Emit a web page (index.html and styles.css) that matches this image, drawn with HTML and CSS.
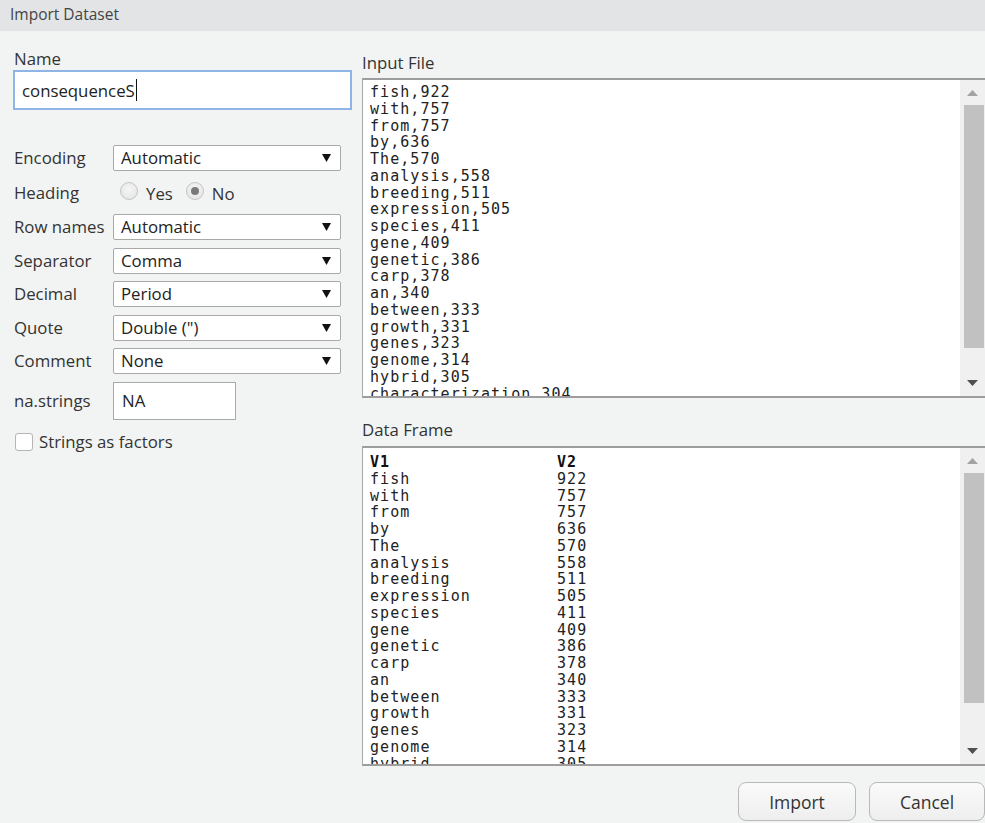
FILE: index.html
```html
<!DOCTYPE html>
<html>
<head>
<meta charset="utf-8">
<link rel="stylesheet" href="styles.css">
</head>
<body>
<div class="titlebar">Import Dataset</div>
<div class="main">
  <div class="left">
    <div class="name-label">Name</div>
    <div class="name-input">consequenceS<span class="caret"></span></div>
    <div class="form">
      <div class="lbl">Encoding</div>
      <div class="select"><span>Automatic</span><svg class="arrow" width="9" height="8" viewBox="0 0 9 8"><path d="M0 0H9L4.5 8Z" fill="#111"/></svg></div>

      <div class="lbl">Heading</div>
      <div class="radios">
        <span class="radio"></span><span class="rtext">Yes</span>
        <span class="radio checked"></span><span class="rtext">No</span>
      </div>

      <div class="lbl">Row names</div>
      <div class="select"><span>Automatic</span><svg class="arrow" width="9" height="8" viewBox="0 0 9 8"><path d="M0 0H9L4.5 8Z" fill="#111"/></svg></div>

      <div class="lbl">Separator</div>
      <div class="select"><span>Comma</span><svg class="arrow" width="9" height="8" viewBox="0 0 9 8"><path d="M0 0H9L4.5 8Z" fill="#111"/></svg></div>

      <div class="lbl">Decimal</div>
      <div class="select"><span>Period</span><svg class="arrow" width="9" height="8" viewBox="0 0 9 8"><path d="M0 0H9L4.5 8Z" fill="#111"/></svg></div>

      <div class="lbl">Quote</div>
      <div class="select"><span>Double (")</span><svg class="arrow" width="9" height="8" viewBox="0 0 9 8"><path d="M0 0H9L4.5 8Z" fill="#111"/></svg></div>

      <div class="lbl">Comment</div>
      <div class="select"><span>None</span><svg class="arrow" width="9" height="8" viewBox="0 0 9 8"><path d="M0 0H9L4.5 8Z" fill="#111"/></svg></div>

      <div class="lbl">na.strings</div>
      <div class="na-row"><div class="na-input">NA</div></div>
    </div>
    <div class="check-row"><span class="checkbox"></span><span>Strings as factors</span></div>
  </div>

  <div class="right">
    <div class="section-label">Input File</div>
    <div class="box">
      <pre class="box-text">fish,922
with,757
from,757
by,636
The,570
analysis,558
breeding,511
expression,505
species,411
gene,409
genetic,386
carp,378
an,340
between,333
growth,331
genes,323
genome,314
hybrid,305
characterization,304
study,299
population,287</pre>
      <div class="scrollbar">
        <svg class="sb-arrow" width="11" height="6" viewBox="0 0 11 6"><path d="M0 6H11L5.5 0Z" fill="#a3a3a3"/></svg>
        <div class="thumb thumb-input"></div>
        <svg class="sb-arrow" width="11" height="6" viewBox="0 0 11 6"><path d="M0 0H11L5.5 6Z" fill="#505050"/></svg>
      </div>
    </div>

    <div class="section-label df-label">Data Frame</div>
    <div class="box">
      <div class="df-text">
        <div class="df-row head"><span>V1</span><span>V2</span></div>
        <div class="df-row"><span>fish</span><span>922</span></div>
        <div class="df-row"><span>with</span><span>757</span></div>
        <div class="df-row"><span>from</span><span>757</span></div>
        <div class="df-row"><span>by</span><span>636</span></div>
        <div class="df-row"><span>The</span><span>570</span></div>
        <div class="df-row"><span>analysis</span><span>558</span></div>
        <div class="df-row"><span>breeding</span><span>511</span></div>
        <div class="df-row"><span>expression</span><span>505</span></div>
        <div class="df-row"><span>species</span><span>411</span></div>
        <div class="df-row"><span>gene</span><span>409</span></div>
        <div class="df-row"><span>genetic</span><span>386</span></div>
        <div class="df-row"><span>carp</span><span>378</span></div>
        <div class="df-row"><span>an</span><span>340</span></div>
        <div class="df-row"><span>between</span><span>333</span></div>
        <div class="df-row"><span>growth</span><span>331</span></div>
        <div class="df-row"><span>genes</span><span>323</span></div>
        <div class="df-row"><span>genome</span><span>314</span></div>
        <div class="df-row"><span>hybrid</span><span>305</span></div>
        <div class="df-row"><span>characterization</span><span>304</span></div>
      </div>
      <div class="scrollbar">
        <svg class="sb-arrow" width="11" height="6" viewBox="0 0 11 6"><path d="M0 6H11L5.5 0Z" fill="#a3a3a3"/></svg>
        <div class="thumb thumb-df"></div>
        <svg class="sb-arrow" width="11" height="6" viewBox="0 0 11 6"><path d="M0 0H11L5.5 6Z" fill="#505050"/></svg>
      </div>
    </div>

    <div class="footer">
      <div class="btn">Import</div>
      <div class="btn btn-cancel">Cancel</div>
    </div>
  </div>
</div>
</body>
</html>
```

FILE: styles.css
```css
html, body {
  margin: 0;
  padding: 0;
  height: 100%;
  overflow: hidden;
}
body {
  background: #f2f3f3;
  font-family: "Open Sans", "Noto Sans", sans-serif;
  color: #333;
  font-size: 16.8px;
}
.titlebar {
  height: 31px;
  background: #e3e4e6;
  color: #444;
  font-size: 15.5px;
  line-height: 29px;
  padding-left: 10px;
  box-sizing: border-box;
}
.main {
  display: grid;
  grid-template-columns: 339px 623px;
  column-gap: 10px;
  padding-left: 13px;
  padding-top: 17px;
}
.left {
  display: flex;
  flex-direction: column;
}
.name-label {
  height: 22px;
  line-height: 22px;
  padding-left: 1px;
  color: #333;
}
.name-input {
  height: 40px;
  box-sizing: border-box;
  border: 2px solid #8fb5e6;
  background: #fff;
  padding-left: 7px;
  display: flex;
  align-items: center;
  color: #222;
}
.caret {
  display: inline-block;
  width: 1px;
  height: 22px;
  background: #111;
  margin-left: 1px;
}
.form {
  margin-top: 35px;
  display: grid;
  grid-template-columns: 100px 228px;
  grid-template-rows: 26px 28px 26px 26px 26px 26px 26px 38px;
  row-gap: 7.5px;
  align-items: center;
}
.lbl {
  padding-left: 1px;
  color: #333;
  white-space: nowrap;
  line-height: 22px;
}
.select {
  height: 26px;
  box-sizing: border-box;
  border: 1px solid #a9a9a9;
  border-radius: 2px;
  background: #fff;
  display: flex;
  align-items: center;
  justify-content: space-between;
  padding: 0 9px 0 7px;
  color: #222;
  line-height: 22px;
}
.arrow {
  display: block;
}
.radios {
  display: flex;
  align-items: center;
  padding-left: 7px;
  padding-top: 2px;
  line-height: 22px;
}
.radio {
  width: 16px;
  height: 16px;
  border-radius: 50%;
  border: 1px solid #c4c4c4;
  background: radial-gradient(circle at 50% 40%, #f6f6f6, #e2e2e2);
  box-sizing: content-box;
  position: relative;
  margin-top: -6px;
}
.radio.checked::after {
  content: "";
  position: absolute;
  left: 4px;
  top: 4px;
  width: 8px;
  height: 8px;
  border-radius: 50%;
  background: #7a7a7a;
}
.rtext {
  margin-left: 8px;
  margin-right: 13px;
  color: #333;
}
.na-row {
  display: flex;
}
.na-input {
  width: 123px;
  height: 38px;
  box-sizing: border-box;
  border: 1px solid #a9a9a9;
  background: #fff;
  display: flex;
  align-items: center;
  padding-left: 8px;
  color: #222;
}
.check-row {
  margin-top: 11px;
  display: flex;
  align-items: center;
  padding-left: 2px;
  color: #333;
  line-height: 22px;
}
.checkbox {
  width: 16px;
  height: 16px;
  border: 1px solid #b5b5b5;
  border-radius: 3px;
  background: #fff;
  margin-right: 6px;
}
.right {
  display: flex;
  flex-direction: column;
}
.section-label {
  margin-top: 4px;
  height: 26px;
  line-height: 22px;
  color: #333;
}
.df-label {
  margin-top: 20px;
  height: 28px;
  line-height: 24px;
}
.box {
  height: 320px;
  box-sizing: border-box;
  border-top: 2px solid #9d9d9d;
  border-left: 1px solid #a9a9a9;
  border-bottom: 2px solid #9d9d9d;
  background: #fff;
  display: flex;
  overflow: hidden;
}
.box-text, .df-text {
  flex: 1;
  margin: 0;
  padding: 4px 0 0 7px;
  font-family: "DejaVu Sans Mono", "Liberation Mono", monospace;
  font-size: 15px;
  letter-spacing: 1.05px;
  line-height: 16.75px;
  color: #222;
  overflow: hidden;
}
.df-text {
  padding-top: 6px;
}
.df-row {
  display: grid;
  grid-template-columns: 187px auto;
  white-space: pre;
}
.df-row.head {
  font-weight: bold;
  color: #111;
}
.scrollbar {
  width: 25px;
  flex: none;
  background: #f0f0f0;
  display: flex;
  flex-direction: column;
  align-items: center;
  padding-top: 10px;
  padding-bottom: 10px;
  box-sizing: border-box;
}
.sb-arrow {
  display: block;
  flex: none;
}
.thumb {
  width: 20px;
  background: #c1c1c1;
  margin-left: 2px;
}
.thumb-input {
  margin-top: 9px;
  height: 243px;
}
.thumb-df {
  margin-top: 9px;
  height: 230px;
}
.scrollbar .sb-arrow:last-child {
  margin-top: auto;
}
.footer {
  display: flex;
  justify-content: flex-end;
  gap: 13px;
  margin-top: 16px;
}
.btn {
  width: 118px;
  height: 39px;
  box-sizing: border-box;
  border: 1px solid #b9b9b9;
  border-radius: 8px;
  background: linear-gradient(#fafafa, #eeeeee);
  display: flex;
  align-items: center;
  justify-content: center;
  color: #333;
  font-size: 17.5px;
}
.btn-cancel {
  width: 116px;
}
```
